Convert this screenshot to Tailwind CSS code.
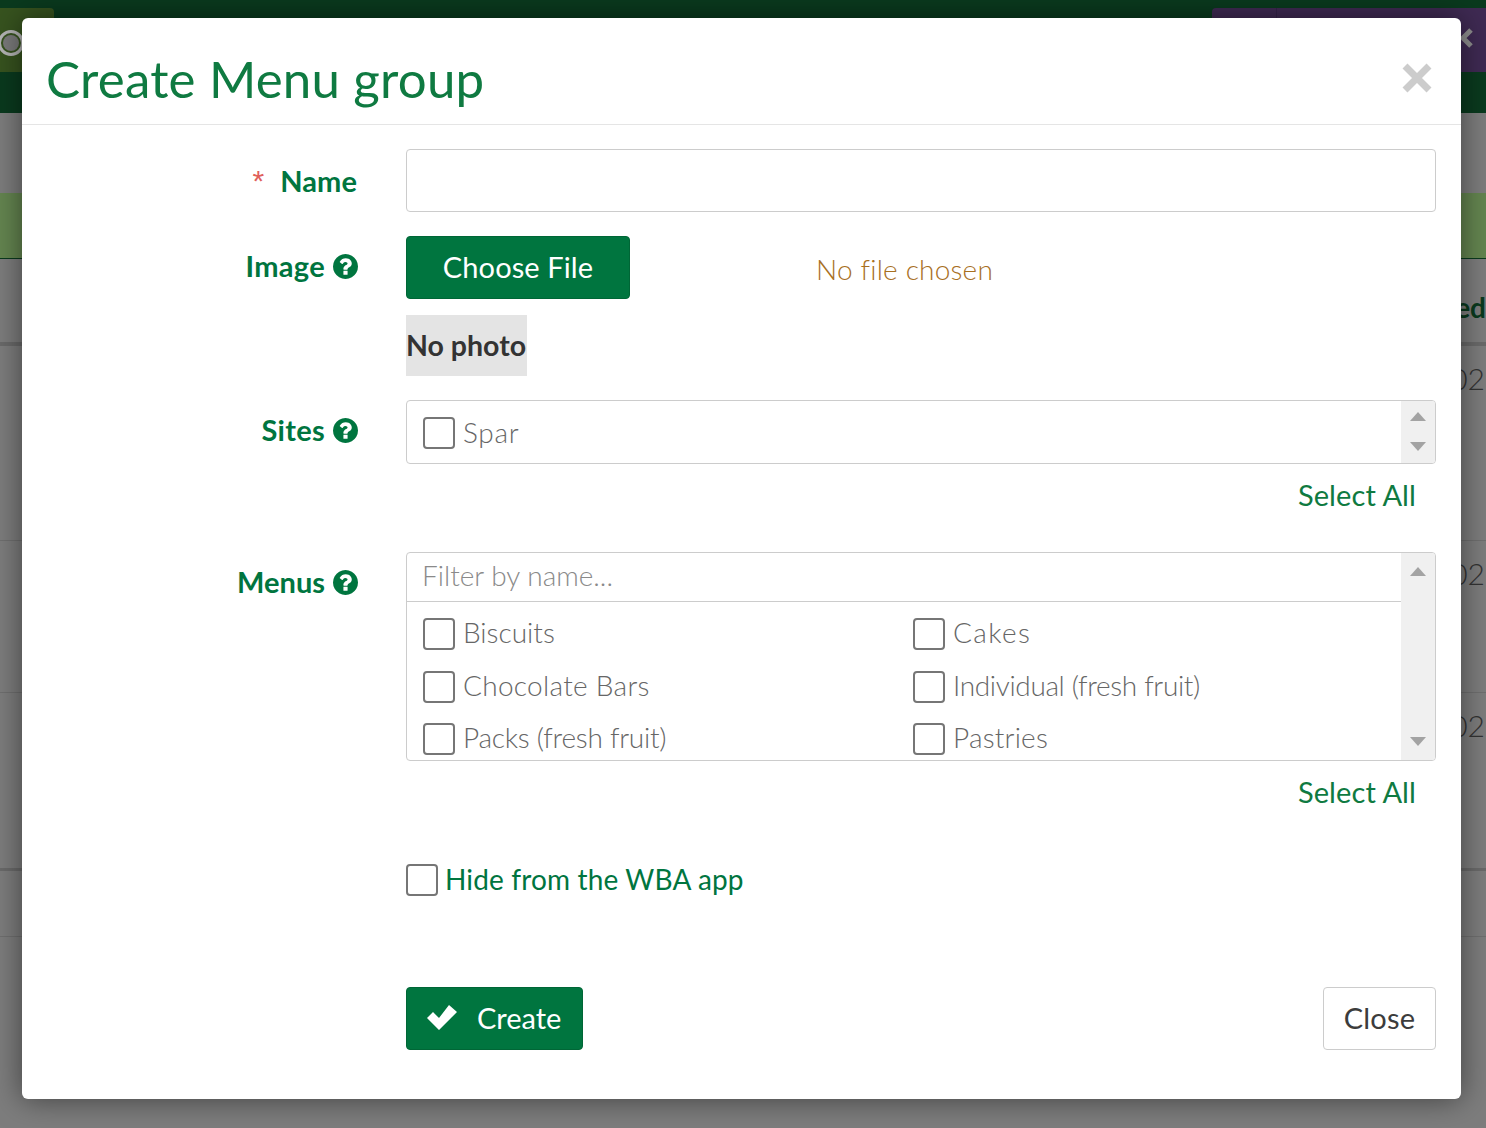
<!DOCTYPE html>
<html lang="en">
<head>
    <meta charset="UTF-8" />
    <title>Create Menu group</title>
    <script src="https://cdn.jsdelivr.net/npm/@tailwindcss/browser@4"></script>
</head>
<body class="m-0 h-[1128px] w-[1486px] overflow-hidden relative bg-[#7d7d7d] font-['Lato','Liberation_Sans',sans-serif]">
    <!-- page behind the backdrop -->
    <div class="h-[113px] bg-[#0a3a1e] relative">
        <div class="absolute left-0 top-[8px] w-[54px] h-[64px] rounded-tr bg-[#37531f] flex items-center">
            <span class="w-[26px] h-[26px] -ml-[2px] mt-[6px] rounded-full border-[3px] border-[#b5b5b5] p-[2px]"><span class="block w-full h-full rounded-full bg-[#7a7a7a]"></span></span>
        </div>
        <div class="absolute right-0 top-[8px] w-[274px] h-[64px] rounded-tl bg-[#3f2a53] flex">
            <div class="w-[65px] border-r border-[#35234a]"></div>
            <svg class="ml-auto mt-[20px] mr-[12px]" width="14" height="20" viewBox="0 0 14 20"><path d="M11 2 L3 10 L11 18" stroke="#8f8f8f" stroke-width="5" fill="none"/></svg>
        </div>
    </div>
    <div class="h-[80px]"></div>
    <div class="h-[66px] bg-[#648550] border-b border-[#0a3a1e]"></div>
    <div class="h-[83px] flex justify-end items-center pt-[12px]">
        <span class="text-[28px] font-bold text-[#0a3a1e]">ed</span>
    </div>
    <div class="h-[199px] border-t-[4px] border-[#6a6a6a] border-b border-b-[#6f6f6f] flex justify-end pt-[17px]"><span class="text-[30px] font-light text-[#333] leading-none mr-[1px]">02</span></div>
    <div class="h-[152px] border-b border-[#6f6f6f] flex justify-end pt-[17px]"><span class="text-[30px] font-light text-[#333] leading-none mr-[1px]">02</span></div>
    <div class="h-[178px] border-b-[3px] border-[#6a6a6a] flex justify-end pt-[17px]"><span class="text-[30px] font-light text-[#333] leading-none mr-[1px]">02</span></div>
    <div class="h-[66px] border-b border-[#6f6f6f]"></div>

    <!-- modal -->
    <div class="absolute left-[22px] top-[18px] w-[1439px] h-[1081px] bg-white rounded-md shadow-[0_0_30px_rgba(0,0,0,0.5)] flex flex-col">
        <div class="h-[107px] border-b border-[#e5e5e5] flex justify-between px-[25px] shrink-0">
            <h1 class="text-[51px] -ml-[1px] tracking-[0.2px] leading-none pt-[35px] text-[#0f7a41] whitespace-nowrap">Create Menu group</h1>
            <svg class="mt-[45px] mr-[4px]" width="30" height="30" viewBox="0 0 30 30"><path d="M3 3 L27 27 M27 3 L3 27" stroke="#cccccc" stroke-width="7" fill="none"/></svg>
        </div>

        <div class="flex-1 pl-[25px] pr-[25px] pt-[24px] flex flex-col">
            <!-- name -->
            <div class="flex">
                <div class="w-[310px] flex justify-end items-center h-[63px]">
                    <span class="text-[#e0605a] text-[30px] font-light font-['Liberation_Sans'] mr-[16px]">*</span>
                    <span class="text-[29px] tracking-[0.1px] font-bold text-[#00753f]">Name</span>
                </div>
                <input type="text" class="ml-[49px] w-[1030px] h-[63px] border border-[#cccccc] rounded" />
            </div>

            <!-- image -->
            <div class="flex mt-[24px]">
                <div class="w-[310px] h-[61px] flex justify-end items-center gap-[8px]">
                    <span class="text-[29px] tracking-[0.3px] font-bold text-[#00753f] pb-[2px]">Image</span>
                    <svg class="-mr-[1px]" width="25" height="25" viewBox="128 128 1536 1536"><path fill="#00753f" d="M1024 1376v-192q0-14-9-23t-23-9h-192q-14 0-23 9t-9 23v192q0 14 9 23t23 9h192q14 0 23-9t9-23zm256-672q0-88-55.5-163t-138.5-116-170-41q-243 0-371 213-15 24 8 42l132 100q7 6 19 6 16 0 25-12 53-68 86-92 34-24 86-24 48 0 85.5 26t37.5 59q0 38-20 63t-68 45q-63 28-115.5 86.5t-52.5 125.5v36q0 14 9 23t23 9h192q14 0 23-9t9-23q0-19 21.5-49.5t54.5-49.5q32-18 49-28.5t46-35 44.5-48 28-60.5 12.5-81zm384 192q0 209-103 385.5t-279.5 279.5-385.5 103-385.5-103-279.5-279.5-103-385.5 103-385.5 279.5-279.5 385.5-103 385.5 103 279.5 279.5 103 385.5z"/></svg>
                </div>
                <div class="ml-[49px] flex flex-col">
                    <div class="flex">
                        <button class="w-[224px] h-[63px] pb-[2px] bg-[#00753f] border border-[#006636] rounded text-white text-[29px] tracking-[0.1px]">Choose File</button>
                        <span class="ml-[186px] pt-[13px] text-[28px] tracking-[0.2px] leading-[40px] font-light text-[#a8701f]">No file chosen</span>
                    </div>
                    <div class="mt-[16px] w-[121px] h-[61px] bg-[#e4e4e4] text-[#333333] text-[28.5px] font-bold leading-[61px] whitespace-nowrap">No photo</div>
                </div>
            </div>

            <!-- sites -->
            <div class="flex mt-[24px]">
                <div class="w-[310px] h-[61px] flex justify-end items-center gap-[8px]">
                    <span class="text-[29px] tracking-[0.3px] font-bold text-[#00753f] pb-[2px]">Sites</span>
                    <svg class="-mr-[1px]" width="25" height="25" viewBox="128 128 1536 1536"><path fill="#00753f" d="M1024 1376v-192q0-14-9-23t-23-9h-192q-14 0-23 9t-9 23v192q0 14 9 23t23 9h192q14 0 23-9t9-23zm256-672q0-88-55.5-163t-138.5-116-170-41q-243 0-371 213-15 24 8 42l132 100q7 6 19 6 16 0 25-12 53-68 86-92 34-24 86-24 48 0 85.5 26t37.5 59q0 38-20 63t-68 45q-63 28-115.5 86.5t-52.5 125.5v36q0 14 9 23t23 9h192q14 0 23-9t9-23q0-19 21.5-49.5t54.5-49.5q32-18 49-28.5t46-35 44.5-48 28-60.5 12.5-81zm384 192q0 209-103 385.5t-279.5 279.5-385.5 103-385.5-103-279.5-279.5-103-385.5 103-385.5 279.5-279.5 385.5-103 385.5 103 279.5 279.5 103 385.5z"/></svg>
                </div>
                <div class="ml-[49px] w-[1030px]">
                    <div class="h-[64px] border border-[#cccccc] rounded flex justify-between overflow-hidden">
                        <label class="flex items-center pl-[16px] pt-[2px] gap-[8px]">
                            <span class="w-[32px] h-[32px] border-2 border-[#767676] rounded-[4px]"></span>
                            <span class="text-[28px] tracking-[0.7px] font-light text-[#666666] pb-[2px]">Spar</span>
                        </label>
                        <div class="w-[34px] bg-[#f0f0f0] flex flex-col items-center pt-[11px] gap-[21px]">
                            <span class="w-0 h-0 border-x-[8px] border-x-transparent border-b-[9px] border-b-[#a3a3a3]"></span>
                            <span class="w-0 h-0 border-x-[8px] border-x-transparent border-t-[9px] border-t-[#a3a3a3]"></span>
                        </div>
                    </div>
                    <div class="text-right pr-[20px] mt-[14px] text-[29px] tracking-[0.1px] leading-[34px] text-[#0f7a41]">Select All</div>
                </div>
            </div>

            <!-- menus -->
            <div class="flex mt-[40px]">
                <div class="w-[310px] h-[61px] flex justify-end items-center gap-[8px]">
                    <span class="text-[29px] font-bold text-[#00753f] pb-[2px]">Menus</span>
                    <svg class="-mr-[1px]" width="25" height="25" viewBox="128 128 1536 1536"><path fill="#00753f" d="M1024 1376v-192q0-14-9-23t-23-9h-192q-14 0-23 9t-9 23v192q0 14 9 23t23 9h192q14 0 23-9t9-23zm256-672q0-88-55.5-163t-138.5-116-170-41q-243 0-371 213-15 24 8 42l132 100q7 6 19 6 16 0 25-12 53-68 86-92 34-24 86-24 48 0 85.5 26t37.5 59q0 38-20 63t-68 45q-63 28-115.5 86.5t-52.5 125.5v36q0 14 9 23t23 9h192q14 0 23-9t9-23q0-19 21.5-49.5t54.5-49.5q32-18 49-28.5t46-35 44.5-48 28-60.5 12.5-81zm384 192q0 209-103 385.5t-279.5 279.5-385.5 103-385.5-103-279.5-279.5-103-385.5 103-385.5 279.5-279.5 385.5-103 385.5 103 279.5 279.5 103 385.5z"/></svg>
                </div>
                <div class="ml-[49px] w-[1030px]">
                    <div class="h-[209px] border border-[#cccccc] rounded flex overflow-hidden">
                        <div class="flex-1 min-w-0">
                            <div class="h-[49px] border-b border-[#cccccc] pl-[15px] text-[28px] leading-[44px] font-light text-[#8a8a8a]">Filter by name...</div>
                            <div class="grid grid-cols-2 pl-[16px] pt-[16px] gap-y-[20.5px]">
                                <label class="flex items-center gap-[8px] h-[32px]"><span class="w-[32px] h-[32px] border-2 border-[#767676] rounded-[4px]"></span><span class="text-[28px] font-light text-[#666666] pb-[4px]">Biscuits</span></label>
                                <label class="flex items-center gap-[8px] h-[32px] ml-[1px]"><span class="w-[32px] h-[32px] border-2 border-[#767676] rounded-[4px]"></span><span class="text-[28px] tracking-[1.4px] font-light text-[#666666] pb-[4px]">Cakes</span></label>
                                <label class="flex items-center gap-[8px] h-[32px]"><span class="w-[32px] h-[32px] border-2 border-[#767676] rounded-[4px]"></span><span class="text-[28px] tracking-[0.3px] font-light text-[#666666] pb-[4px]">Chocolate Bars</span></label>
                                <label class="flex items-center gap-[8px] h-[32px] ml-[1px]"><span class="w-[32px] h-[32px] border-2 border-[#767676] rounded-[4px]"></span><span class="text-[28px] tracking-[-0.35px] font-light text-[#666666] pb-[4px]">Individual (fresh fruit)</span></label>
                                <label class="flex items-center gap-[8px] h-[32px]"><span class="w-[32px] h-[32px] border-2 border-[#767676] rounded-[4px]"></span><span class="text-[28px] tracking-[-0.25px] font-light text-[#666666] pb-[4px]">Packs (fresh fruit)</span></label>
                                <label class="flex items-center gap-[8px] h-[32px] ml-[1px]"><span class="w-[32px] h-[32px] border-2 border-[#767676] rounded-[4px]"></span><span class="text-[28px] tracking-[0.2px] font-light text-[#666666] pb-[4px]">Pastries</span></label>
                            </div>
                        </div>
                        <div class="w-[34px] bg-[#f0f0f0] flex flex-col items-center justify-between pt-[14px] pb-[14px]">
                            <span class="w-0 h-0 border-x-[8px] border-x-transparent border-b-[9px] border-b-[#a3a3a3]"></span>
                            <span class="w-0 h-0 border-x-[8px] border-x-transparent border-t-[9px] border-t-[#a3a3a3]"></span>
                        </div>
                    </div>
                    <div class="text-right pr-[20px] mt-[14px] text-[29px] tracking-[0.1px] leading-[34px] text-[#0f7a41]">Select All</div>
                </div>
            </div>

            <!-- hide -->
            <label class="flex items-center h-[32px] ml-[359px] mt-[55px] gap-[7px]">
                <span class="w-[32px] h-[32px] border-2 border-[#767676] rounded-[4px]"></span>
                <span class="text-[28px] tracking-[0.15px] text-[#00753f] pb-[2px]">Hide from the WBA app</span>
            </label>

            <!-- footer -->
            <div class="flex justify-between ml-[359px] mt-[91px]">
                <button class="w-[177px] h-[63px] pb-[1px] bg-[#00753f] border border-[#006636] rounded text-white text-[29px] flex items-center pl-[20px] gap-[20px]">
                    <svg class="-mt-[2px]" width="30" height="25" viewBox="0 0 30 25"><path d="M0 13 L6 7 L12 13 L22 0 L30 7 L12 25 Z" fill="#fff"/></svg>
                    Create
                </button>
                <button class="w-[113px] h-[63px] pb-[1px] bg-white border border-[#cccccc] rounded text-[#3c3c3c] text-[29px] tracking-[0.2px]">Close</button>
            </div>
        </div>
    </div>
</body>
</html>
